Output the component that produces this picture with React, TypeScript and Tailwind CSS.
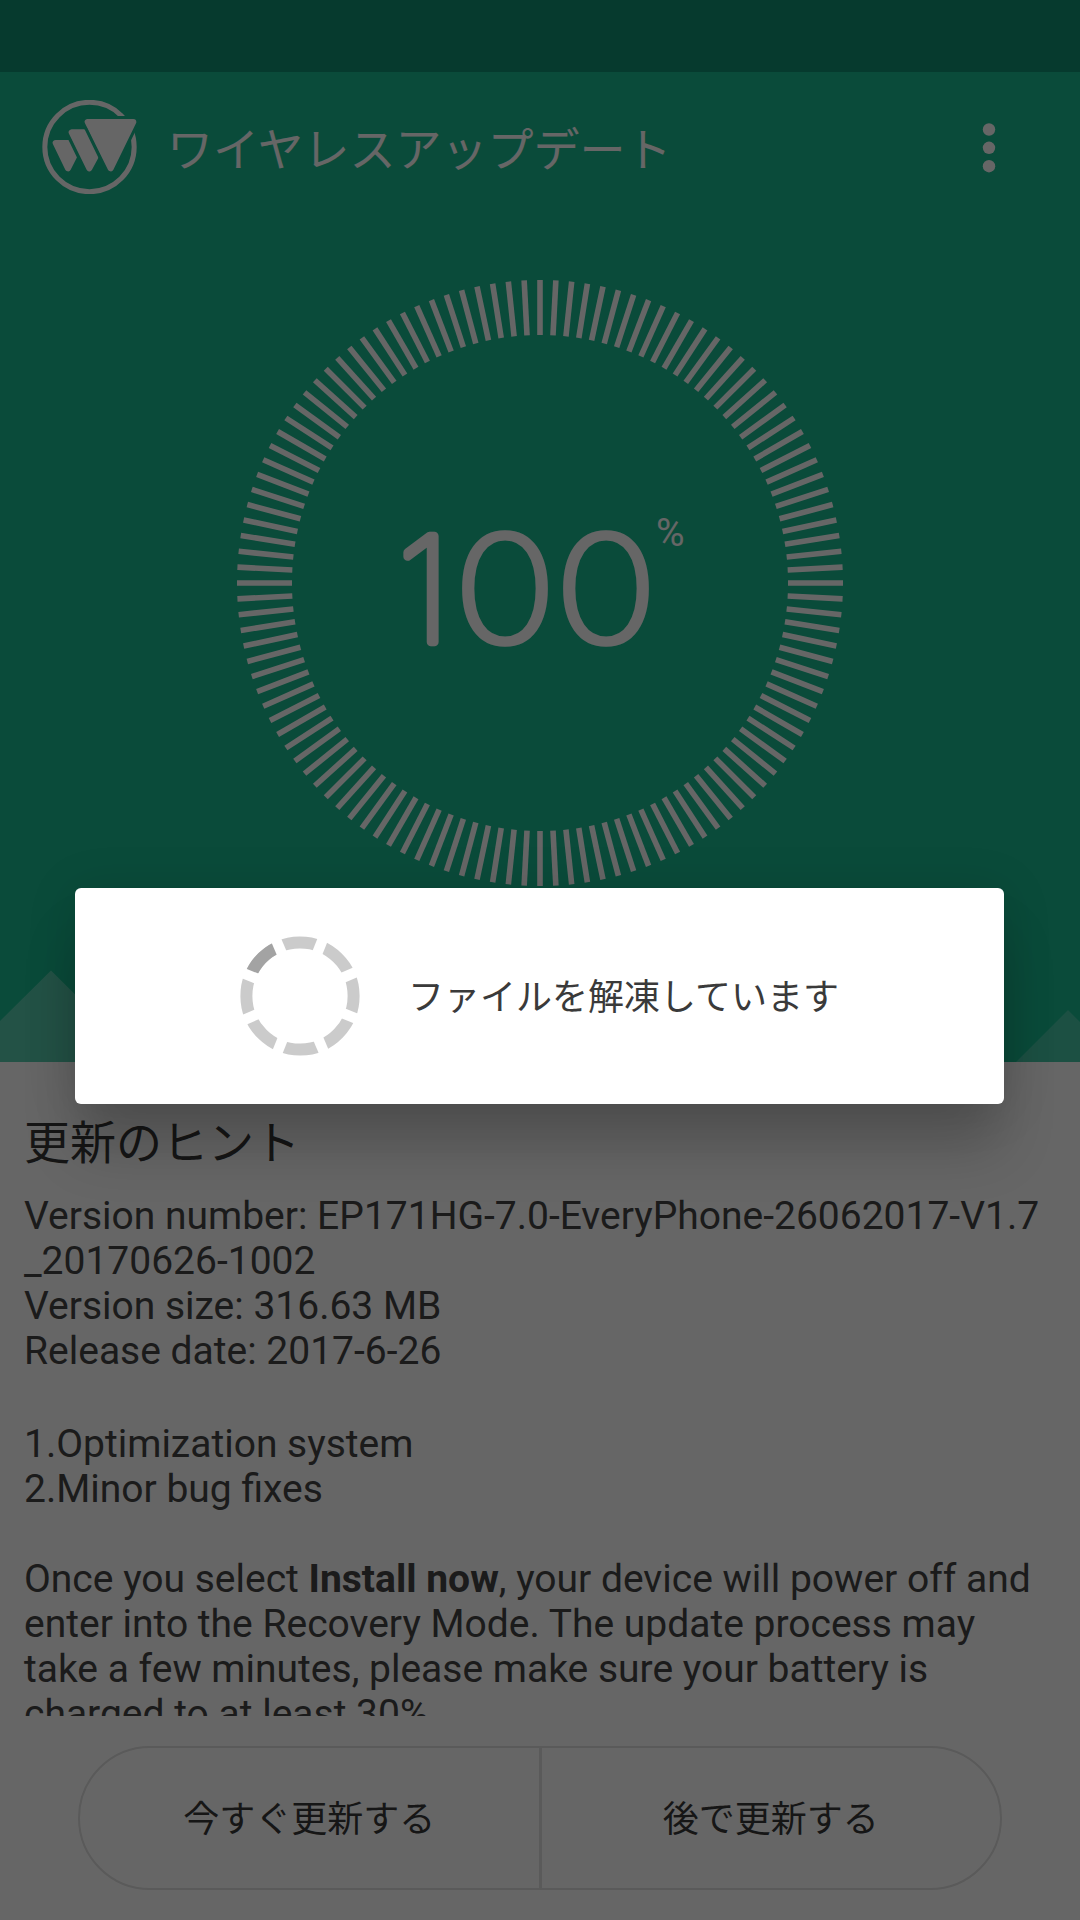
const TICK_COUNT = 120;

function BrandLogo() {
  return (
    <svg viewBox="126 120 288 282" className="h-[94px] w-24" fill="white" stroke="white" strokeLinejoin="round">
      <circle cx="268.5" cy="261" r="134" fill="none" strokeWidth="15" />
      {/* green outline cuts the ring around the large triangle */}
      <path d="M263 186H400L332 325Z" className="stroke-[#19bb91]" strokeWidth="36" />
      <path d="M263 186H400L332 325Z" strokeWidth="18" />
      <path d="M215 217H252L287 290L268 325Z" strokeWidth="18" />
      <path d="M167 249H206L223 288L204 325Z" strokeWidth="18" />
      {/* gaps between the three shapes */}
      <path d="M256 203L300 294M208 236L236 294" className="stroke-[#19bb91]" strokeWidth="8" />
    </svg>
  );
}

function MoreIcon() {
  return (
    <svg viewBox="0 0 14 50" className="mt-0.5 h-[50px] w-[14px]" fill="white">
      <circle cx="7" cy="6.5" r="6.2" />
      <circle cx="7" cy="24.8" r="6.2" />
      <circle cx="7" cy="43.2" r="6.2" />
    </svg>
  );
}

function ProgressDial() {
  const ticks = Array.from({ length: TICK_COUNT }, (_, index) => (index * 360) / TICK_COUNT);

  return (
    <svg viewBox="-303 -303 606 606" className="h-[606px] w-[606px]" fill="white">
      {ticks.map((angle) => (
        <path key={angle} d="M0 -303V-248" stroke="white" strokeWidth="5.6" transform={`rotate(${angle})`} />
      ))}
      <g className="font-[Inter] font-thin" stroke="white" strokeLinejoin="round" textAnchor="middle">
        <text x="-116" y="59" fontSize="146" strokeWidth="8.5">1</text>
        <text transform="translate(-35 59) scale(1.18 1)" fontSize="147" strokeWidth="7">0</text>
        <text transform="translate(66 59) scale(1.18 1)" fontSize="147" strokeWidth="7">0</text>
      </g>
      <text x="116" y="-37" fontSize="39" className="font-[Roboto]">%</text>
    </svg>
  );
}

function Hills() {
  return (
    <svg viewBox="0 0 1080 92" className="h-[92px] w-full" fill="white">
      <path d="M0 51L51 0.5L143 92H0Z" fillOpacity="0.28" />
      <path d="M1016 92L1068 40L1080 52V92Z" fillOpacity="0.2" />
    </svg>
  );
}

function Spinner() {
  return (
    <svg viewBox="-60 -60 120 120" className="h-[120px] w-[120px]" fill="none">
      <g transform="rotate(-0.6)">
        <circle r="53.6" stroke="#cbcbcb" strokeWidth="12" />
        <path d="M-49.5 -20.5A53.6 53.6 0 0 1 -20.5 -49.5" stroke="#a3a3a3" strokeWidth="12" />
        {[22.5, 67.5, 112.5, 157.5].map((angle) => (
          <path key={angle} d="M0 -62V62" stroke="white" strokeWidth="10.5" transform={`rotate(${angle})`} />
        ))}
      </g>
    </svg>
  );
}

function Header() {
  return (
    <header className="flex h-[1062px] flex-col bg-[#19bb91]">
      <div className="h-[72px] shrink-0 bg-[#0f9273]" />
      <div className="flex h-[150px] shrink-0 items-center pr-[84px] pl-[42px]">
        <BrandLogo />
        <h1 className="ml-[29px] flex-1 pt-1.5 text-[46px] leading-none text-white">ワイヤレスアップデート</h1>
        <MoreIcon />
      </div>
      <div className="flex h-[748px] shrink-0 justify-center pt-[58px] pr-px">
        <ProgressDial />
      </div>
      <Hills />
    </header>
  );
}

function UpdateNotes() {
  return (
    <section className="h-[654px] overflow-hidden px-6 pt-[51px] text-[#444]">
      <h2 className="h-[81px] text-[46px] leading-[60px] text-[#373737]">更新のヒント</h2>
      <div className="text-[39px] leading-[45px] whitespace-nowrap">
        <p>Version number: EP171HG-7.0-EveryPhone-26062017-V1.7</p>
        <p>_20170626-1002</p>
        <p>Version size: 316.63 MB</p>
        <p>Release date: 2017-6-26</p>
        <p className="mt-12">1.Optimization system</p>
        <p>2.Minor bug fixes</p>
        <p className="mt-[45px]">
          Once you select <b>Install now</b>, your device will power off and
        </p>
        <p>enter into the Recovery Mode. The update process may</p>
        <p>take a few minutes, please make sure your battery is</p>
        <p>charged to at least 30%.</p>
      </div>
    </section>
  );
}

function Actions() {
  return (
    <div className="mx-[78px] mt-[30px] flex h-36 rounded-full border-2 border-[#e0e0e0] text-[36px] text-[#373737]">
      <button className="flex-1 border-r-[3px] border-[#e0e0e0] pt-1">今すぐ更新する</button>
      <button className="flex-1 pt-1">後で更新する</button>
    </div>
  );
}

export default function App() {
  return (
    <div className="relative h-[1920px] w-[1080px] overflow-hidden bg-white font-[Roboto,'Noto_Sans_CJK_JP',sans-serif]">
      <Header />
      <UpdateNotes />
      <Actions />

      <div className="absolute inset-0 bg-black/60" />
      <div
        role="dialog"
        className="absolute top-[888px] left-[75px] flex h-[216px] w-[929px] items-center justify-center gap-12 rounded-md bg-white text-[36px] text-[#3a3a3a] shadow-[0_48px_56px_-4px_rgba(0,0,0,0.19),0_4px_50px_rgba(0,0,0,0.13)]"
      >
        <Spinner />
        <p className="pt-1">ファイルを解凍しています</p>
      </div>
    </div>
  );
}
